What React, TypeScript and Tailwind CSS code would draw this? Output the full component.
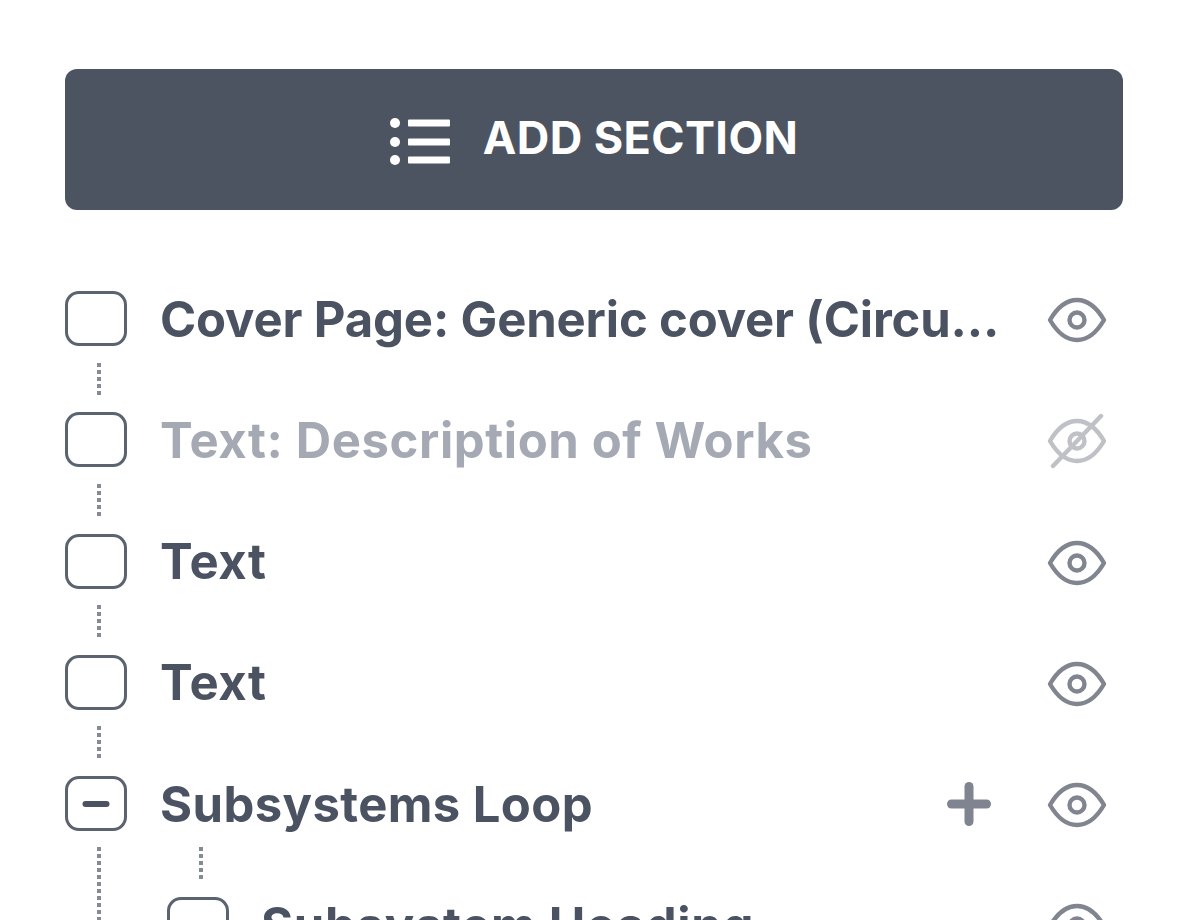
import { Minus, Plus } from 'lucide-react';

const sections = [
  { label: 'Cover Page: Generic cover (Circu...', tracking: 'tracking-[-0.15px]' },
  { label: 'Text: Description of Works', hidden: true, tracking: 'tracking-[0.6px]' },
  { label: 'Text', tracking: 'tracking-[0.6px]' },
  { label: 'Text', tracking: 'tracking-[0.6px]' },
  { label: 'Subsystems Loop', loop: true, tracking: 'tracking-[0.4px]' },
];

const dots =
  'w-1 bg-[repeating-linear-gradient(to_bottom,#858a96_0,#858a96_4px,transparent_4px,transparent_7px)]';

function EyeIcon({ off }: { off?: boolean }) {
  return (
    <svg width="60" height="56" viewBox="0 0 60 56" fill="none" stroke="#80858f" strokeWidth="4.4" className={`translate-y-px ${off ? 'opacity-50' : ''}`}>
      <path d="M3 28C10 16 19 8 30 8s20 8 27 20c-7 12-16 20-27 20S10 40 3 28Z" strokeLinejoin="round" />
      <circle cx="30" cy="28" r="7.5" />
      {off && <path d="M54 3 6 53" strokeLinecap="round" />}
    </svg>
  );
}

function ListIcon() {
  return (
    <svg width="60" height="48" viewBox="0 0 60 48" fill="#fff" className="mt-[5px]">
      <circle cx="5" cy="5" r="5" />
      <circle cx="5" cy="24" r="5" />
      <circle cx="5" cy="42" r="5" />
      <rect x="18" y="1.5" width="42" height="7" rx="1" />
      <rect x="18" y="20.5" width="42" height="7" rx="1" />
      <rect x="18" y="38.5" width="42" height="7" rx="1" />
    </svg>
  );
}

function Checkbox({ loop }: { loop?: boolean }) {
  return (
    <div className="flex h-[55px] w-[62px] shrink-0 items-center justify-center self-start rounded-[14px] border-[3px] border-[#5b6270] bg-white">
      {loop && <Minus size={36} strokeWidth={4} className="text-[#4b5362]" />}
    </div>
  );
}

export default function App() {
  return (
    <div className="h-[920px] overflow-hidden bg-white pl-[65px] pr-[69px] pt-[69px] font-['Inter',sans-serif]">
      <button className="flex h-[141px] w-full items-center justify-center gap-[33px] rounded-xl bg-[#4d5461] text-[45px] font-bold tracking-[0.4px] text-white">
        <ListIcon />
        <span className="pb-1">ADD SECTION</span>
      </button>

      <div className="mt-[81px]">
        {sections.map((section) => (
          <div key={section.label + String(section.loop)}>
            <div className="flex h-14 items-center">
              <Checkbox loop={section.loop} />
              <span className={`ml-[33px] flex-1 whitespace-nowrap text-[49px] font-bold leading-none ${section.tracking} ${section.hidden ? 'text-[#a5a9b3]' : 'text-[#4b5362]'}`}>
                {section.label}
              </span>
              {section.loop && <Plus size={60} strokeWidth={3.6} className="mr-[48px] text-[#7f8490]" />}
              <div className="mr-[16px]">
                <EyeIcon off={section.hidden} />
              </div>
            </div>
            {!section.loop && (
              <div className="flex h-[65.25px] items-center pl-[32px]">
                <div className={`h-[34px] ${dots}`} />
              </div>
            )}
          </div>
        ))}

        <div className="relative pl-[102px] pt-[65px]">
          <div className={`absolute left-[32px] top-[15px] h-[200px] ${dots}`} />
          <div className={`absolute left-[134px] top-[15px] h-[34px] ${dots}`} />
          <div className="flex h-14 items-center">
            <Checkbox />
            <span className="ml-[32px] flex-1 whitespace-nowrap text-[49px] font-bold leading-none tracking-[0.7px] text-[#4b5362]">
              Subsystem Heading
            </span>
            <div className="mr-[16px]">
              <EyeIcon />
            </div>
          </div>
        </div>
      </div>
    </div>
  );
}
